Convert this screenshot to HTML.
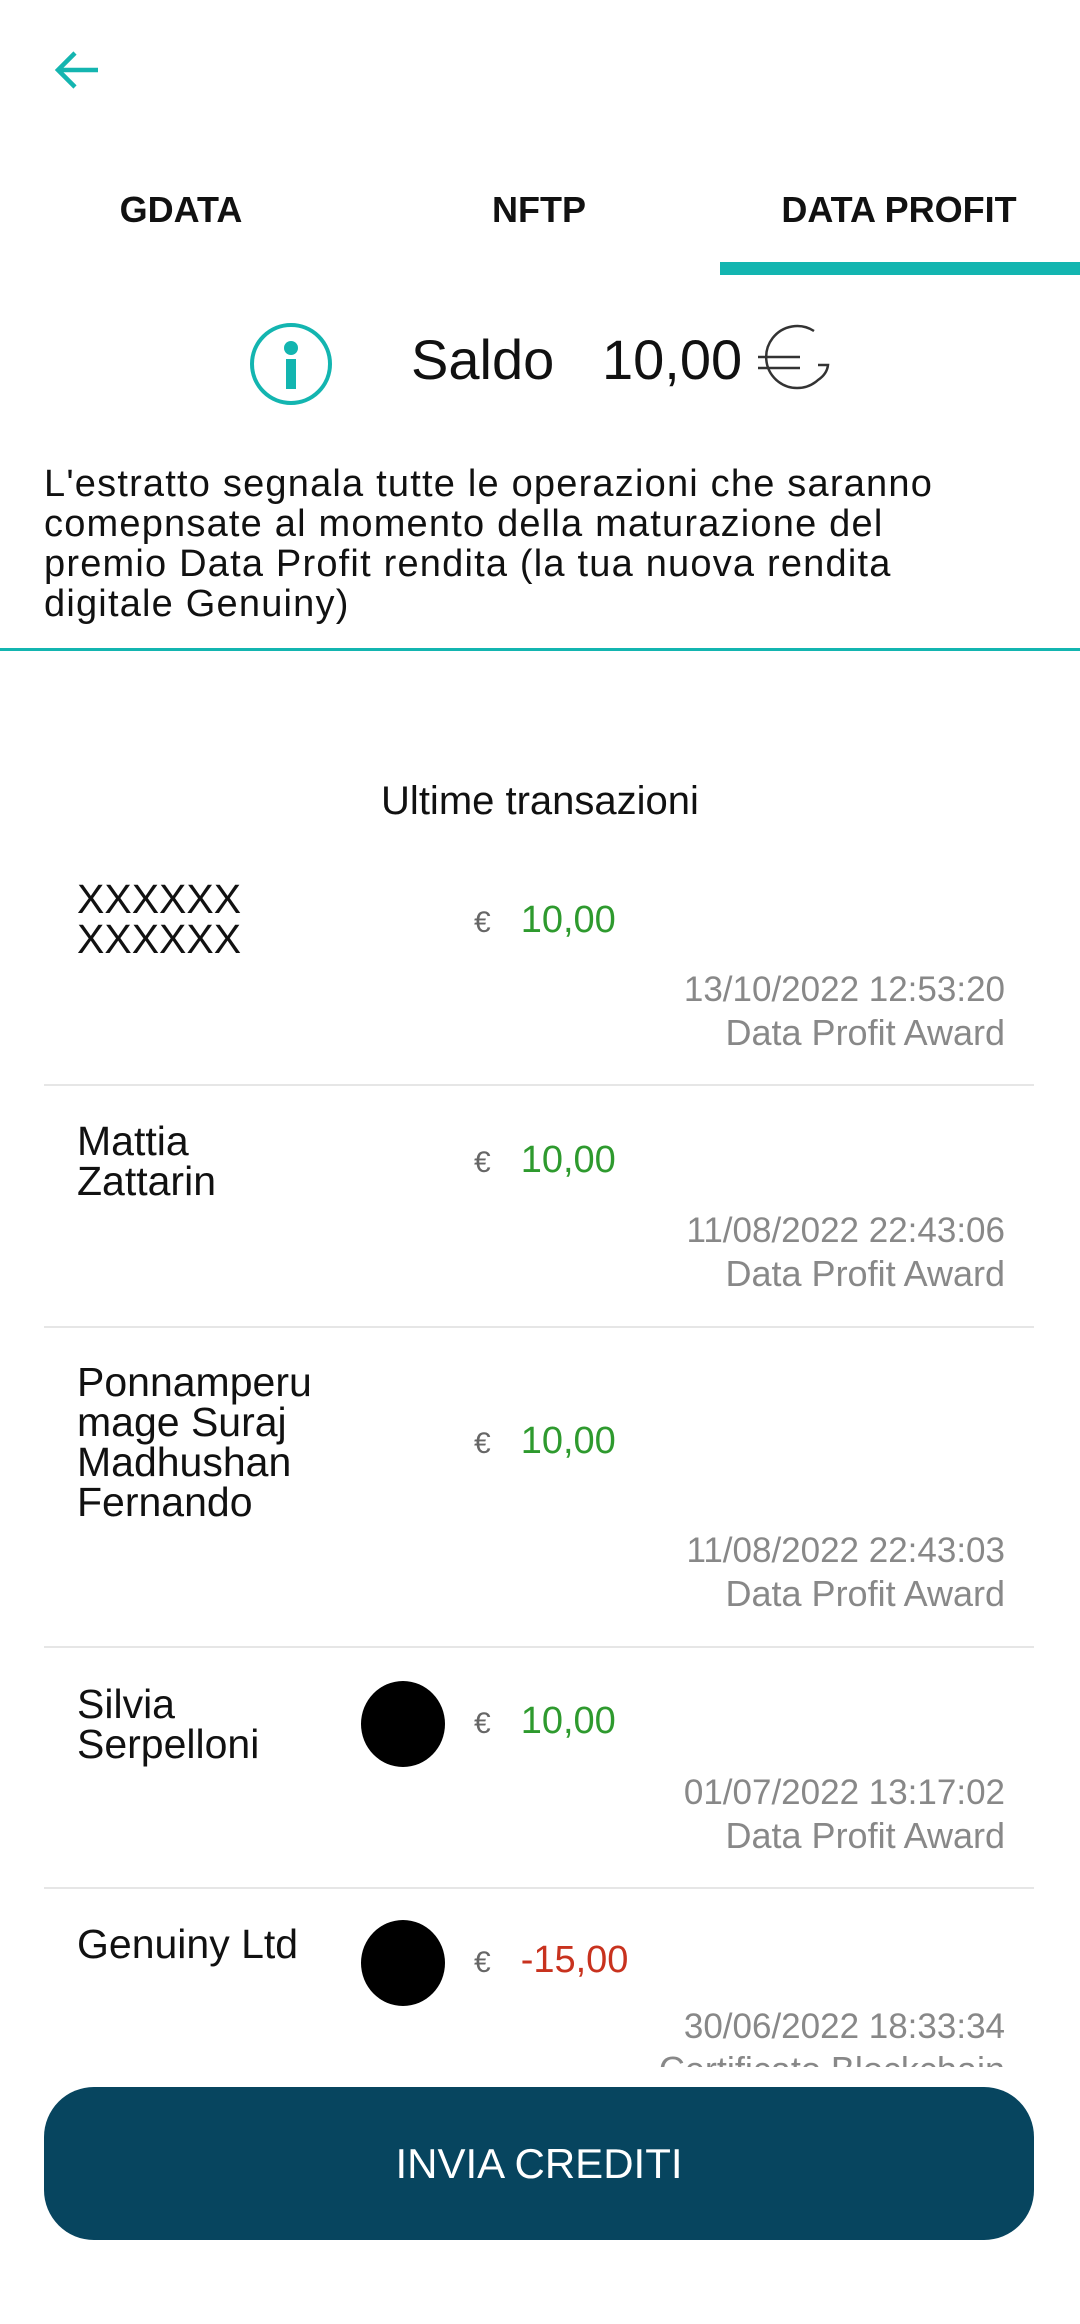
<!DOCTYPE html>
<html><head><meta charset="utf-8"><style>
*{margin:0;padding:0;box-sizing:border-box}
body{width:1080px;height:2324px;background:#fff;position:relative;overflow:hidden;font-family:"Liberation Sans",sans-serif;color:#111}
.a{position:absolute;white-space:nowrap}
.tab{font-weight:bold;font-size:36px;line-height:40px;top:190px;transform:translateX(-50%)}
.nm{left:77px;font-size:41px;line-height:40px;color:#111}
.amt{left:474px;font-size:38px;line-height:44px;color:#2e9a2e}
.amt.r{color:#c8321e}
.eu{font-size:30px;color:#666;margin-right:30px}
.dt{right:75px;font-size:35px;line-height:40px;color:#888;text-align:right}
.dt span{font-size:36px;line-height:46px}
.sep{position:absolute;left:44px;width:990px;height:2px;background:#e6e6e6}
.dot{position:absolute;left:361px;width:84px;height:86px;border-radius:50%;background:#000}
</style></head><body>
<svg class="a" style="left:52px;top:46px" width="50" height="50" viewBox="0 0 50 50"><path d="M46 24H7M23 7L6 24l17 17" fill="none" stroke="#14b5b0" stroke-width="4.5"/></svg>
<div class="a tab" style="left:181px">GDATA</div>
<div class="a tab" style="left:539px">NFTP</div>
<div class="a tab" style="left:899px">DATA PROFIT</div>
<div class="a" style="left:720px;top:262px;width:360px;height:13px;background:#13b5b0"></div>
<svg class="a" style="left:249px;top:322px" width="84" height="84" viewBox="0 0 84 84"><circle cx="42" cy="42" r="39" fill="none" stroke="#13b5b0" stroke-width="4"/><circle cx="42" cy="26" r="7" fill="#13b5b0"/><rect x="37" y="37" width="10" height="30" fill="#13b5b0"/></svg>
<div class="a" style="left:411px;top:328px;font-size:56px;line-height:64px">Saldo</div>
<div class="a" style="left:602px;top:328px;font-size:56px;line-height:64px">10,00</div>
<svg class="a" style="left:756px;top:322px" width="90" height="76" viewBox="0 0 90 76"><path d="M58 9A31 31 0 1 0 62 58Q71 52 72 43H62" fill="none" stroke="#333" stroke-width="2.5"/><path d="M2 35H44M2 46H44" stroke="#333" stroke-width="2.5"/></svg>
<div class="a" style="left:44px;top:464px;font-size:38px;letter-spacing:1.2px;line-height:40px;white-space:normal;width:1036px">L'estratto segnala tutte le operazioni che saranno<br>comepnsate al momento della maturazione del<br>premio Data Profit rendita (la tua nuova rendita<br>digitale Genuiny)</div>
<div class="a" style="left:0;top:648px;width:1080px;height:3px;background:#13b5b0"></div>
<div class="a" style="left:0;width:1080px;text-align:center;top:781px;font-size:40px;line-height:40px">Ultime transazioni</div>

<div class="a" style="left:0;top:0;width:1080px;height:2067px;overflow:hidden">
<div class="a nm" style="top:879px">XXXXXX<br>XXXXXX</div>
<div class="a amt" style="top:898px"><span class="eu">€</span>10,00</div>
<div class="a dt" style="top:970px">13/10/2022 12:53:20<br><span>Data Profit Award</span></div>
<div class="sep" style="top:1084px"></div>

<div class="a nm" style="top:1121px">Mattia<br>Zattarin</div>
<div class="a amt" style="top:1138px"><span class="eu">€</span>10,00</div>
<div class="a dt" style="top:1211px">11/08/2022 22:43:06<br><span>Data Profit Award</span></div>
<div class="sep" style="top:1326px"></div>

<div class="a nm" style="top:1362px">Ponnamperu<br>mage Suraj<br>Madhushan<br>Fernando</div>
<div class="a amt" style="top:1419px"><span class="eu">€</span>10,00</div>
<div class="a dt" style="top:1531px">11/08/2022 22:43:03<br><span>Data Profit Award</span></div>
<div class="sep" style="top:1646px"></div>

<div class="a nm" style="top:1684px">Silvia<br>Serpelloni</div>
<div class="dot" style="top:1681px"></div>
<div class="a amt" style="top:1699px"><span class="eu">€</span>10,00</div>
<div class="a dt" style="top:1773px">01/07/2022 13:17:02<br><span>Data Profit Award</span></div>
<div class="sep" style="top:1887px"></div>

<div class="a nm" style="top:1924px">Genuiny Ltd</div>
<div class="dot" style="top:1920px"></div>
<div class="a amt r" style="top:1938px"><span class="eu">€</span>-15,00</div>
<div class="a dt" style="top:2007px">30/06/2022 18:33:34<br><span>Certificato Blockchain</span></div>
</div>

<div class="a" style="left:44px;top:2087px;width:990px;height:153px;border-radius:50px;background:#07455f;color:#fff;text-align:center;font-size:42px;line-height:153px">INVIA CREDITI</div>
</body></html>
